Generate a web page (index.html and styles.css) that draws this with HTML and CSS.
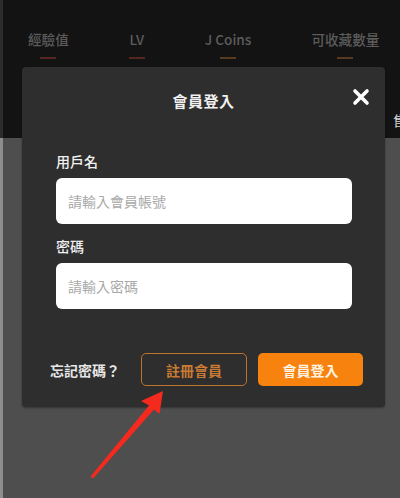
FILE: index.html
```html
<!DOCTYPE html>
<html lang="zh-Hant">
<head>
<meta charset="utf-8">
<title>會員登入</title>
<link rel="stylesheet" href="styles.css">
</head>
<body>
<div class="screen">
  <header class="stats">
    <div class="tabs">
      <div class="tab"><span class="tab-label">經驗值</span><i class="bar bar-red"></i></div>
      <div class="tab"><span class="tab-label">LV</span><i class="bar bar-red"></i></div>
      <div class="tab"><span class="tab-label">J Coins</span><i class="bar bar-orange"></i></div>
      <div class="tab"><span class="tab-label">可收藏數量</span><i class="bar bar-orange"></i></div>
    </div>
    <div class="peek">售</div>
  </header>
  <main class="backdrop"></main>

  <div class="modal">
    <h2 class="modal-title">會員登入</h2>
    <button class="close" aria-label="關閉">
      <svg viewBox="0 0 18 18" width="18" height="18"><path d="M3 3 L15 15 M15 3 L3 15" stroke="#fff" stroke-width="3.6" stroke-linecap="round" fill="none"/></svg>
    </button>
    <div class="form">
      <label class="field-label">用戶名</label>
      <div class="input"><span class="placeholder">請輸入會員帳號</span></div>
      <label class="field-label second">密碼</label>
      <div class="input"><span class="placeholder">請輸入密碼</span></div>
    </div>
    <div class="actions">
      <span class="forgot">忘記密碼？</span>
      <button class="btn btn-outline">註冊會員</button>
      <button class="btn btn-fill">會員登入</button>
    </div>
  </div>

  <svg class="arrow" viewBox="0 0 400 498" width="400" height="498">
    <polygon points="163,391 141,401 149,405.5 90.5,476.5 93,478.5 154,409.5 159.5,414" fill="#f52a1f"/>
  </svg>
</div>
</body>
</html>
```

FILE: styles.css
```css
* { box-sizing: border-box; }

html, body {
  margin: 0;
  padding: 0;
  width: 400px;
  height: 498px;
  overflow: hidden;
  background: #4e4e4e;
  font-family: "Noto Sans CJK TC", "Noto Sans", "Liberation Sans", sans-serif;
}

.screen {
  position: relative;
  width: 400px;
  height: 498px;
  display: flex;
  flex-direction: column;
}

.stats {
  height: 138px;
  background: #131313;
  border-left: 3px solid #2c2c2c;
  overflow: hidden;
  white-space: nowrap;
}

.tabs {
  display: flex;
  gap: 60px;
  padding: 31px 0 0 25px;
}

.tab {
  display: flex;
  flex-direction: column;
  align-items: center;
}

.tab-label {
  font-size: 13.6px;
  line-height: 16px;
  font-weight: 500;
  color: #5c5c5c;
}

.bar {
  display: block;
  width: 16px;
  height: 2px;
  margin-top: 10px;
}
.bar-red { background: #55251f; }
.bar-orange { background: #5a3a1e; }

.peek {
  margin: 54px 0 0 390px;
  font-size: 14px;
  line-height: 14px;
  color: #d8d8d8;
}

.backdrop {
  flex: 1;
  background: #4e4e4e;
  border-left: 3px solid #8e8e8e;
}

.modal {
  position: absolute;
  left: 22px;
  top: 67px;
  width: 363px;
  height: 340px;
  background: #2e2e2e;
  border-radius: 4px;
  padding-top: 24px;
  box-shadow: 0 1px 2px rgba(0,0,0,0.35);
}

.modal-title {
  margin: 0;
  text-align: center;
  font-size: 15px;
  line-height: 20px;
  font-weight: 700;
  color: #f0f0f0;
  letter-spacing: 0.5px;
}

.close {
  position: absolute;
  top: 21px;
  right: 15px;
  width: 18px;
  height: 18px;
  padding: 0;
  border: 0;
  background: none;
}
.close svg { display: block; }

.form {
  margin-top: 40px;
  padding: 0 33px 0 34px;
  display: flex;
  flex-direction: column;
}

.field-label {
  font-size: 14px;
  line-height: 20px;
  font-weight: 500;
  color: #f0f0f0;
  margin-bottom: 7px;
}
.field-label.second { margin-top: 12px; }

.input {
  height: 46px;
  background: #ffffff;
  border-radius: 6px;
  display: flex;
  align-items: center;
  padding-left: 12px;
}

.placeholder {
  font-size: 14px;
  color: #a9a9a9;
}

.actions {
  margin-top: 44px;
  padding: 0 22px 0 28px;
  display: flex;
  align-items: center;
}

.forgot {
  font-size: 14px;
  font-weight: 700;
  color: #e6e6e6;
  margin-right: auto;
}

.btn {
  width: 106px;
  height: 33px;
  border-radius: 5px;
  font-family: inherit;
  font-size: 14px;
  font-weight: 700;
  padding: 0;
}

.btn-outline {
  background: transparent;
  border: 1.5px solid #bd742f;
  color: #c97b33;
}

.btn-fill {
  margin-left: 11px;
  width: 105px;
  background: #f7820d;
  border: 0;
  color: #fff3e3;
}

.arrow {
  position: absolute;
  left: 0;
  top: 0;
  pointer-events: none;
}
```
